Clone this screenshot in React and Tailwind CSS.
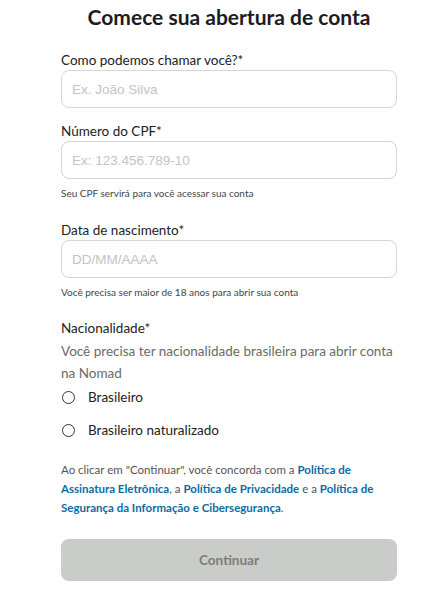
const fields = [
    { id: 1, label: 'Como podemos chamar você?*', placeholder: 'Ex. João Silva' },
    { id: 2, label: 'Número do CPF*', placeholder: 'Ex: 123.456.789-10', help: 'Seu CPF servirá para você acessar sua conta' },
    { id: 3, label: 'Data de nascimento*', placeholder: 'DD/MM/AAAA', help: 'Você precisa ser maior de 18 anos para abrir sua conta' },
]

const Field = ({ label, placeholder, help, first }) => (
    <div className={first ? '' : 'mt-[13px]'}>
        <label className="block text-[13.5px] leading-5 text-[#222]">{label}</label>
        <input
            placeholder={placeholder}
            className="block w-full h-[38px] px-[10px] rounded-[8px] border border-[#d6d6d6] bg-white text-[13.5px] outline-none placeholder:text-[#c4c4c4]"
            style={{ fontFamily: '"Liberation Sans", Arial, sans-serif' }}
        />
        {help && <p className="mt-[8px] mb-[8px] text-[10px] leading-3 text-[#444]">{help}</p>}
    </div>
)

export default function App() {
    return (
        <div className="w-[441px] h-[594px] bg-white overflow-hidden" style={{ fontFamily: 'Lato, "Noto Sans", sans-serif' }}>
            <div className="ml-[61px] w-[336px] flex flex-col">
                <h1 className="pt-[3px] text-center text-[21px] leading-7 font-bold text-[#1c1c1c]">Comece sua abertura de conta</h1>

                <div className="mt-[19px] flex flex-col">
                    {fields.map((f, i) => (
                        <Field key={f.id} {...f} first={i === 0} />
                    ))}
                </div>

                {/* Nacionalidade */}
                <div className="mt-[12px]">
                    <p className="text-[13.5px] leading-5 text-[#222]">Nacionalidade*</p>
                    <p className="mt-[2px] text-[13.5px] leading-[22px] text-[#6a6a6a]">Você precisa ter nacionalidade brasileira para abrir conta na Nomad</p>
                    <div className="flex flex-col gap-[7px]">
                        {['Brasileiro', 'Brasileiro naturalizado'].map((opt) => (
                            <label key={opt} className="flex items-center gap-[13px] h-[26px] cursor-pointer">
                                <span className="w-[13px] h-[13px] rounded-full border-[1.5px] border-[#333] ml-[1px]" />
                                <span className="text-[13.5px] text-[#222]">{opt}</span>
                            </label>
                        ))}
                    </div>
                </div>

                <p className="mt-[17px] text-[11.5px] leading-[19px] text-[#555]">
                    Ao clicar em "Continuar", você concorda com a{' '}
                    <a className="font-bold text-[#0b6ca3]">Política de Assinatura Eletrônica</a>, a{' '}
                    <a className="font-bold text-[#0b6ca3]">Política de Privacidade</a> e a{' '}
                    <a className="font-bold text-[#0b6ca3]">Política de Segurança da Informação e Cibersegurança</a>.
                </p>

                <button className="mt-[22px] w-full h-[42px] rounded-[8px] bg-[#c9ccc8] text-[13.5px] font-bold text-[#7b7e7b]">
                    Continuar
                </button>
            </div>
        </div>
    )
}
